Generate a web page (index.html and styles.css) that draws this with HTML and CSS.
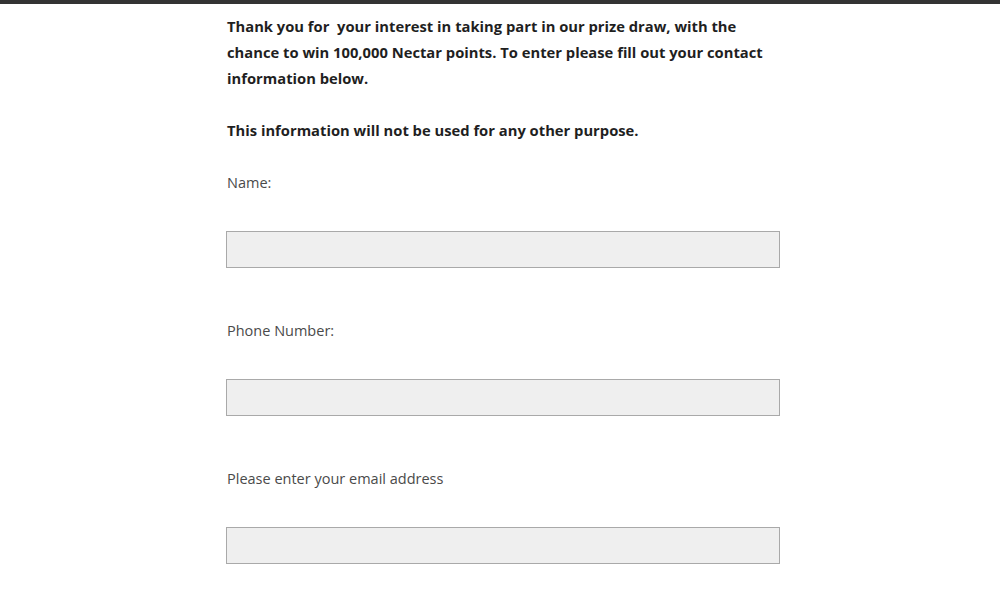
FILE: index.html
```html
<!DOCTYPE html>
<html>
<head>
<meta charset="utf-8">
<link rel="stylesheet" href="styles.css">
</head>
<body>
<div class="topbar"></div>
<main class="content">
  <p class="intro">Thank you for &nbsp;your interest in taking part in our prize draw, with the chance to win 100,000 Nectar points. To enter please fill out your contact information below.</p>
  <p class="intro">This information will not be used for any other purpose.</p>
  <div class="field">
    <label class="label">Name:</label>
    <input class="input" type="text">
  </div>
  <div class="field">
    <label class="label">Phone Number:</label>
    <input class="input" type="text">
  </div>
  <div class="field">
    <label class="label">Please enter your email address</label>
    <input class="input" type="text">
  </div>
</main>
</body>
</html>
```
FILE: styles.css
```css
html, body {
  margin: 0;
  padding: 0;
  background: #fff;
}
body {
  font-family: "Open Sans", "Liberation Sans", sans-serif;
  color: #222;
}
.topbar {
  height: 4px;
  background: #333;
}
.content {
  width: 554px;
  margin: 0 0 0 226px;
  padding-top: 9px;
}
.intro {
  margin: 0 0 26px 1px;
  font-size: 14.75px;
  font-weight: 700;
  line-height: 26px;
  color: #1f1f1f;
}
.field {
  display: flex;
  flex-direction: column;
  margin-bottom: 49px;
}
.label {
  display: block;
  margin: 1px 0 35px 1px;
  font-size: 14.5px;
  line-height: 26px;
  color: #4a4a4a;
}
.input {
  display: block;
  box-sizing: border-box;
  width: 554px;
  height: 37px;
  margin: 0;
  border: 1px solid #a9a9a9;
  background: #efefef;
}
```
